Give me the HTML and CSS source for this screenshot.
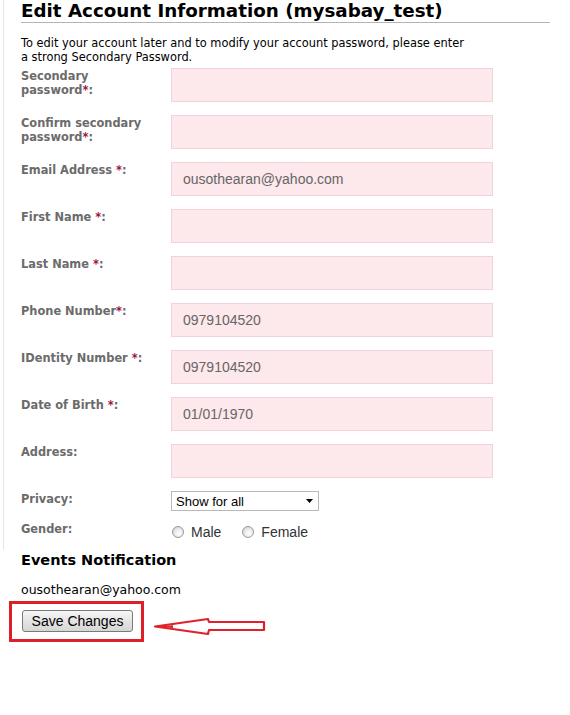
FILE: index.html
```html
<!DOCTYPE html>
<html>
<head>
<meta charset="utf-8">
<link rel="stylesheet" href="styles.css">
</head>
<body>
<div class="page">
  <div class="main">
    <h1 class="title">Edit Account Information (mysabay_test)</h1>
    <p class="intro">To edit your account later and to modify your account password, please enter a strong Secondary Password.</p>
    <div class="form">
      <div class="label"><span>Secondary</span><br><span>password</span><span class="req">*</span>:</div>
      <div class="field"><div class="input"></div></div>

      <div class="label"><span>Confirm secondary</span><br><span>password</span><span class="req">*</span>:</div>
      <div class="field"><div class="input"></div></div>

      <div class="label">Email Address <span class="req">*</span>:</div>
      <div class="field"><div class="input">ousothearan@yahoo.com</div></div>

      <div class="label">First Name <span class="req">*</span>:</div>
      <div class="field"><div class="input"></div></div>

      <div class="label">Last Name <span class="req">*</span>:</div>
      <div class="field"><div class="input"></div></div>

      <div class="label">Phone Number<span class="req">*</span>:</div>
      <div class="field"><div class="input">0979104520</div></div>

      <div class="label">IDentity Number <span class="req">*</span>:</div>
      <div class="field"><div class="input">0979104520</div></div>

      <div class="label">Date of Birth <span class="req">*</span>:</div>
      <div class="field"><div class="input">01/01/1970</div></div>

      <div class="label">Address:</div>
      <div class="field"><div class="input"></div></div>

      <div class="label label-privacy">Privacy:</div>
      <div class="field field-privacy">
        <div class="select">
          <span>Show for all</span>
          <svg class="caret" width="7" height="4" viewBox="0 0 7 4"><path d="M0 0H7L3.5 4Z" fill="#000"/></svg>
        </div>
      </div>

      <div class="label label-gender">Gender:</div>
      <div class="field field-gender">
        <span class="radio"></span><span class="radio-text">Male</span>
        <span class="radio radio-2"></span><span class="radio-text">Female</span>
      </div>
    </div>
  </div>
  <div class="bottom">
    <h2 class="events">Events Notification</h2>
    <div class="mail">ousothearan@yahoo.com</div>
    <div class="action">
      <div class="highlight">
        <div class="button">Save Changes</div>
      </div>
      <svg class="arrow" width="116" height="22" viewBox="0 0 116 22">
        <path d="M2 9.5 L55 2 L56 5 L111 5 L111 13 L56 13 L55 17 Z" fill="none" stroke="#e0212b" stroke-width="2.2" stroke-linejoin="round"/>
        <path d="M2 9.5 L20 8.2 L20 11 Z" fill="#e0212b"/>
      </svg>
    </div>
  </div>
</div>
</body>
</html>
```

FILE: styles.css
```css
html, body {
  margin: 0;
  padding: 0;
  background: #fff;
}

.page {
  padding-left: 3px;
  font-family: Verdana, "DejaVu Sans", sans-serif;
}

.main {
  border-left: 1px solid #e6e6e6;
  padding-left: 17px;
  padding-bottom: 6px;
}

.title {
  margin: 0;
  width: 529px;
  font-size: 18.3px;
  font-weight: bold;
  color: #000;
  line-height: 22px;
  border-bottom: 1px solid #b4b4b4;
}

.intro {
  margin: 13px 0 0 0;
  width: 450px;
  font-size: 11.4px;
  line-height: 14px;
  color: #000;
}

.form {
  margin-top: 4px;
  display: grid;
  grid-template-columns: 150px 322px;
  row-gap: 13px;
}

.label {
  font-size: 11.4px;
  font-weight: bold;
  color: #6b6b6b;
  line-height: 14px;
  padding-top: 1px;
  width: 132px;
}

.req {
  color: #a0123c;
}

.input {
  box-sizing: border-box;
  height: 34px;
  background: #fde8ec;
  border: 1px solid #f2d2da;
  padding: 0 11px;
  font-family: "Liberation Sans", Arial, sans-serif;
  font-size: 14px;
  line-height: 32px;
  color: #666;
}

.label-gender {
  margin-top: -8px;
  padding-top: 6px;
}

.select {
  box-sizing: border-box;
  width: 148px;
  height: 20px;
  border: 1px solid #b9b9b9;
  background: #fff;
  display: flex;
  align-items: center;
  justify-content: space-between;
  padding: 0 5px 0 4px;
  font-family: "Liberation Sans", Arial, sans-serif;
  font-size: 13px;
  color: #000;
}

.caret {
  display: block;
}

.field-gender {
  margin-top: -8px;
  display: flex;
  align-items: center;
  height: 24px;
  padding-top: 4px;
  padding-left: 1px;
  font-family: "Liberation Sans", Arial, sans-serif;
  font-size: 14px;
  color: #333;
}

.radio {
  box-sizing: border-box;
  width: 12px;
  height: 12px;
  border-radius: 50%;
  border: 1px solid #9a9a9a;
  background: radial-gradient(circle at 60% 65%, #fff 0%, #ececec 45%, #c8c8c8 100%);
  margin-right: 7px;
}

.radio-2 {
  margin-left: 21px;
}

.radio-text {
  line-height: 16px;
}

.bottom {
  padding-left: 18px;
}

.events {
  margin: 1px 0 0 0;
  font-size: 14.5px;
  font-weight: bold;
  color: #000;
  line-height: 18px;
}

.mail {
  margin-top: 13px;
  font-size: 12.5px;
  line-height: 16px;
  color: #000;
}

.action {
  display: flex;
  align-items: flex-start;
  margin-top: 3px;
  margin-left: -12px;
}

.highlight {
  border: 3px solid #dc1f29;
  padding: 6px 8px 7px 10px;
}

.button {
  box-sizing: border-box;
  width: 111px;
  height: 22px;
  border: 1px solid #7a7a7a;
  border-radius: 3px;
  background: linear-gradient(#f6f6f6, #e4e4e4 50%, #d6d6d6);
  font-family: "Liberation Sans", Arial, sans-serif;
  font-size: 14px;
  line-height: 20px;
  text-align: center;
  color: #000;
}

.arrow {
  display: block;
  margin-top: 16px;
  margin-left: 9px;
}
```
